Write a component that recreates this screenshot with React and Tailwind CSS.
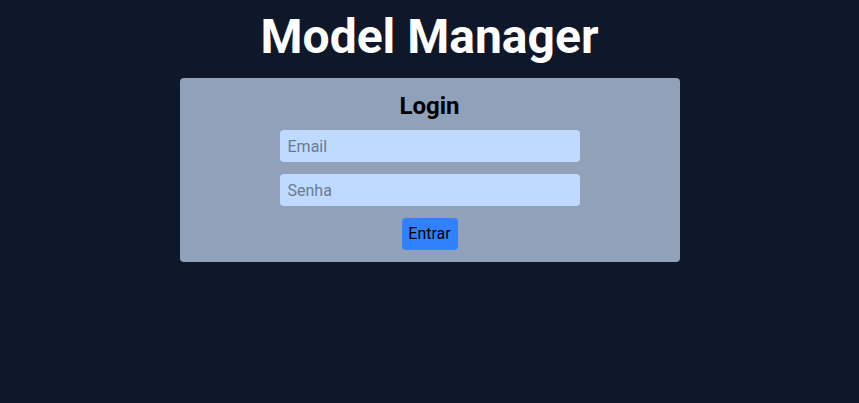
export default function App() {
  return (
    <div className="min-h-screen bg-[#0f172a] flex flex-col items-center pt-[13px]" style={{ fontFamily: "Roboto, 'Liberation Sans', sans-serif" }}>
      <h1 className="text-5xl leading-[48px] font-bold text-white mb-[17px]">Model Manager</h1>
      <div className="w-[500px] bg-[#90a1b9] rounded p-3 flex flex-col items-center">
        <h2 className="text-2xl leading-8 font-bold text-black mb-2">Login</h2>
        <div className="flex flex-col items-center gap-3">
          <input type="email" placeholder="Email" className="w-[300px] h-8 px-2 rounded bg-[#bedbff] text-base text-black placeholder:text-[#6b7a90] outline-none" />
          <input type="password" placeholder="Senha" className="w-[300px] h-8 px-2 rounded bg-[#bedbff] text-base text-black placeholder:text-[#6b7a90] outline-none" />
          <button className="w-14 h-8 rounded bg-[#3080ff] text-base text-black">Entrar</button>
        </div>
      </div>
    </div>
  );
}
